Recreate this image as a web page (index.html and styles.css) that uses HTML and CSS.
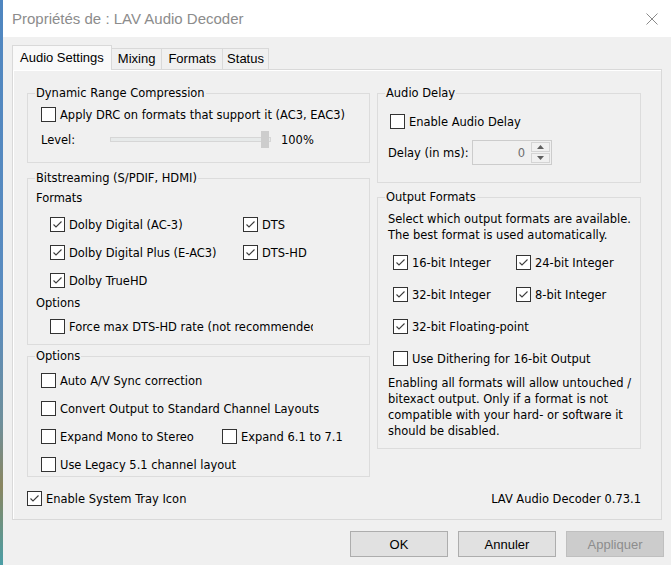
FILE: index.html
```html
<!DOCTYPE html>
<html lang="fr">
  <head>
    <meta charset="utf-8">
    <title>Propriétés de : LAV Audio Decoder</title>
    <link rel="stylesheet" href="styles.css">
  </head>

  <body>
    <div class="Screen">
      <div class="Desktop"></div>

      <div class="Window">
        <!-- title bar -->
        <div class="TitleBar">
          <span class="TitleText">Propriétés de : LAV Audio Decoder</span>
          <svg class="CloseIcon" width="12" height="12" viewBox="0 0 12 12">
            <path d="M0.5 0.5 L11.5 11.5 M11.5 0.5 L0.5 11.5" stroke="#8a8a8a" stroke-width="1" fill="none" />
          </svg>
        </div>

        <!-- tabs -->
        <div class="Tabs">
          <div class="Tab selected">Audio Settings</div>
          <div class="Tab">Mixing</div>
          <div class="Tab">Formats</div>
          <div class="Tab status">Status</div>
        </div>

        <div class="Panel">
          <!-- left column -->
          <div class="Column leftCol">
            <div class="Group drc">
              <span class="GroupTitle">Dynamic Range Compression</span>
              <label class="Check drcCheck"><span class="Box"></span>Apply DRC on formats that support it (AC3, EAC3)</label>
              <div class="LevelRow">
                <span class="LevelLabel">Level:</span>
                <div class="Track"><span class="Thumb"></span></div>
                <span class="LevelValue">100%</span>
              </div>
            </div>

            <div class="Group bitstream">
              <span class="GroupTitle">Bitstreaming (S/PDIF, HDMI)</span>
              <span class="SubLabel">Formats</span>
              <div class="BitGrid">
                <label class="Check"><span class="Box"><svg width="13" height="13" viewBox="0 0 13 13"><path d="M2.5 6.5 L5 9 L10.5 3.5" /></svg></span>Dolby Digital (AC-3)</label>
                <label class="Check"><span class="Box"><svg width="13" height="13" viewBox="0 0 13 13"><path d="M2.5 6.5 L5 9 L10.5 3.5" /></svg></span>DTS</label>
                <label class="Check"><span class="Box"><svg width="13" height="13" viewBox="0 0 13 13"><path d="M2.5 6.5 L5 9 L10.5 3.5" /></svg></span>Dolby Digital Plus (E-AC3)</label>
                <label class="Check"><span class="Box"><svg width="13" height="13" viewBox="0 0 13 13"><path d="M2.5 6.5 L5 9 L10.5 3.5" /></svg></span>DTS-HD</label>
                <label class="Check"><span class="Box"><svg width="13" height="13" viewBox="0 0 13 13"><path d="M2.5 6.5 L5 9 L10.5 3.5" /></svg></span>Dolby TrueHD</label>
              </div>
              <span class="SubLabel optLabel">Options</span>
              <label class="Check forceCheck"><span class="Box"></span>Force max DTS-HD rate (not recommended)</label>
            </div>

            <div class="Group options">
              <span class="GroupTitle">Options</span>
              <div class="OptList">
                <label class="Check"><span class="Box"></span>Auto A/V Sync correction</label>
                <label class="Check"><span class="Box"></span>Convert Output to Standard Channel Layouts</label>
                <div class="OptPair">
                  <label class="Check monoCheck"><span class="Box"></span>Expand Mono to Stereo</label>
                  <label class="Check"><span class="Box"></span>Expand 6.1 to 7.1</label>
                </div>
                <label class="Check"><span class="Box"></span>Use Legacy 5.1 channel layout</label>
              </div>
            </div>

            <label class="Check trayCheck"><span class="Box"><svg width="13" height="13" viewBox="0 0 13 13"><path d="M2.5 6.5 L5 9 L10.5 3.5" /></svg></span>Enable System Tray Icon</label>
          </div>

          <!-- right column -->
          <div class="Column rightCol">
            <div class="Group delay">
              <span class="GroupTitle">Audio Delay</span>
              <label class="Check delayCheck"><span class="Box"></span>Enable Audio Delay</label>
              <div class="DelayRow">
                <span class="DelayLabel">Delay (in ms):</span>
                <div class="Spin">
                  <span class="SpinValue">0</span>
                  <div class="SpinButtons">
                    <span class="SpinBtn"><svg width="7" height="4" viewBox="0 0 7 4"><path d="M0 4 L3.5 0 L7 4 Z" /></svg></span>
                    <span class="SpinBtn"><svg width="7" height="4" viewBox="0 0 7 4"><path d="M0 0 L3.5 4 L7 0 Z" /></svg></span>
                  </div>
                </div>
              </div>
            </div>

            <div class="Group output">
              <span class="GroupTitle">Output Formats</span>
              <p class="Desc">Select which output formats are available.<br>The best format is used automatically.</p>
              <div class="OutGrid">
                <label class="Check"><span class="Box"><svg width="13" height="13" viewBox="0 0 13 13"><path d="M2.5 6.5 L5 9 L10.5 3.5" /></svg></span>16-bit Integer</label>
                <label class="Check"><span class="Box"><svg width="13" height="13" viewBox="0 0 13 13"><path d="M2.5 6.5 L5 9 L10.5 3.5" /></svg></span>24-bit Integer</label>
                <label class="Check"><span class="Box"><svg width="13" height="13" viewBox="0 0 13 13"><path d="M2.5 6.5 L5 9 L10.5 3.5" /></svg></span>32-bit Integer</label>
                <label class="Check"><span class="Box"><svg width="13" height="13" viewBox="0 0 13 13"><path d="M2.5 6.5 L5 9 L10.5 3.5" /></svg></span>8-bit Integer</label>
                <label class="Check wide"><span class="Box"><svg width="13" height="13" viewBox="0 0 13 13"><path d="M2.5 6.5 L5 9 L10.5 3.5" /></svg></span>32-bit Floating-point</label>
                <label class="Check wide"><span class="Box"></span>Use Dithering for 16-bit Output</label>
              </div>
              <p class="Note">Enabling all formats will allow untouched /<br>bitexact output. Only if a format is not<br>compatible with your hard- or software it<br>should be disabled.</p>
            </div>

            <div class="Version">LAV Audio Decoder 0.73.1</div>
          </div>
        </div>

        <!-- dialog buttons -->
        <div class="Buttons">
          <button class="Btn">OK</button>
          <button class="Btn">Annuler</button>
          <button class="Btn disabled" disabled>Appliquer</button>
        </div>
      </div>
    </div>
  </body>
</html>
```

FILE: styles.css
```css
body {
  margin: 0;
  font-family: "DejaVu Sans Condensed", "DejaVu Sans", sans-serif;
  font-stretch: condensed;
  font-size: 12.75px;
  color: #000;
}

.Screen {
  display: flex;
  width: 671px;
  height: 565px;
  overflow: hidden;
  background: #f0f0f0;
}

.Desktop {
  width: 3px;
  background: linear-gradient(#4f86c0 0%, #5a8cc0 55%, #6f8f9a 75%, #8a8660 86%, #4b9ea6 100%);
}

.Window {
  flex: 1;
  display: flex;
  flex-direction: column;
  background: #f0f0f0;
}

.TitleBar {
  height: 37px;
  display: flex;
  align-items: center;
  padding: 0 13px 0 9px;
  background: #fff;
}

.TitleText {
  flex: 1;
  font-family: "Liberation Sans", sans-serif;
  font-size: 15px;
  color: #8c8c8c;
}

/* tabs */
.Tabs {
  display: flex;
  align-items: flex-end;
  height: 24px;
  margin-top: 8px;
  padding-left: 9px;
}

.Tab {
  box-sizing: border-box;
  height: 21px;
  padding: 0 6px;
  margin-left: -1px;
  border: 1px solid #d9d9d9;
  border-bottom: none;
  background: #f0f0f0;
  font-family: "Liberation Sans", sans-serif;
  font-size: 13px;
  line-height: 20px;
}

.Tab.status {
  padding: 0 4px;
}

.Tab.selected {
  position: relative;
  z-index: 1;
  height: 25px;
  margin-left: 0;
  margin-bottom: -1px;
  padding: 0 7px;
  background: #f9f9f9;
  line-height: 23px;
}

.Panel {
  box-sizing: border-box;
  width: 650px;
  height: 451px;
  margin-left: 9px;
  padding: 23px 0 0 14px;
  display: flex;
  gap: 7px;
  border: 1px solid #d9d9d9;
  box-shadow: inset 1px 1px 0 #fff;
  background: #f0f0f0;
}

.Column {
  display: flex;
  flex-direction: column;
  align-items: flex-start;
}

.leftCol {
  width: 343px;
}

.rightCol {
  width: 264px;
}

/* group boxes */
.Group {
  box-sizing: border-box;
  align-self: stretch;
  display: flex;
  flex-direction: column;
  align-items: flex-start;
  border: 1px solid #dcdcdc;
}

.GroupTitle {
  margin: -9px 0 0 7px;
  padding: 0 1px;
  line-height: 16px;
  background: #f0f0f0;
  white-space: nowrap;
}

.SubLabel {
  margin: 4px 0 0 8px;
  line-height: 16px;
}

/* checkboxes */
.Check {
  display: flex;
  align-items: center;
  height: 20px;
  white-space: nowrap;
}

.Box {
  box-sizing: border-box;
  width: 15px;
  height: 15px;
  margin-right: 4px;
  flex-shrink: 0;
  display: flex;
  align-items: center;
  justify-content: center;
  border: 1px solid #333;
  background: #fff;
}

.Box path {
  fill: none;
  stroke: #3c3c3c;
  stroke-width: 1.1;
}

/* dynamic range compression */
.drc {
  padding-bottom: 13px;
}

.drcCheck {
  margin: 3px 0 0 13px;
}

.LevelRow {
  display: flex;
  align-items: center;
  height: 20px;
  margin: 5px 0 0 13px;
}

.LevelLabel {
  width: 69px;
}

.Track {
  box-sizing: border-box;
  width: 161px;
  height: 5px;
  display: flex;
  align-items: center;
  justify-content: flex-end;
  border: 1px solid #d6d6d6;
  background: #e7eaea;
}

.Thumb {
  flex-shrink: 0;
  width: 8px;
  height: 17px;
  margin-right: 1px;
  background: #cdcdcd;
}

.LevelValue {
  margin-left: 10px;
}

/* bitstreaming */
.bitstream {
  margin-top: 15px;
  padding-bottom: 8px;
}

.BitGrid {
  display: grid;
  grid-template-columns: 193px auto;
  row-gap: 8px;
  margin: 8px 0 0 22px;
}

.optLabel {
  margin-top: 5px;
}

.forceCheck {
  width: 263px;
  overflow: hidden;
  margin: 5px 0 0 22px;
}

/* options */
.options {
  margin-top: 11px;
  padding-bottom: 2px;
}

.OptList {
  display: flex;
  flex-direction: column;
  gap: 8px;
  margin: 6px 0 0 13px;
}

.OptPair {
  display: flex;
}

.monoCheck {
  width: 181px;
}

.trayCheck {
  margin-top: 11px;
}

/* audio delay */
.delay {
  padding-bottom: 17px;
}

.delayCheck {
  margin: 10px 0 0 12px;
}

.DelayRow {
  display: flex;
  align-items: center;
  height: 25px;
  margin: 9px 0 0 10px;
}

.DelayLabel {
  width: 84px;
}

.Spin {
  box-sizing: border-box;
  width: 80px;
  height: 25px;
  display: flex;
  border: 1px solid #cccccc;
  background: #f0f0f0;
}

.SpinValue {
  flex: 1;
  padding-right: 6px;
  text-align: right;
  line-height: 23px;
  color: #6d6d6d;
}

.SpinButtons {
  width: 19px;
  display: flex;
  flex-direction: column;
  gap: 1px;
  padding: 1px 1px 1px 0;
}

.SpinBtn {
  flex: 1;
  display: flex;
  align-items: center;
  justify-content: center;
  border: 1px solid #d4d4d4;
  background: #f0f0f0;
}

.SpinBtn path {
  fill: #5f5f5f;
}

/* output formats */
.output {
  margin-top: 14px;
  padding-bottom: 9px;
}

.Desc {
  margin: 6px 0 0 10px;
  line-height: 16px;
  white-space: nowrap;
}

.OutGrid {
  display: grid;
  grid-template-columns: 123px auto;
  row-gap: 12px;
  margin: 9px 0 0 15px;
}

.OutGrid .wide {
  grid-column: 1 / 3;
}

.Note {
  margin: 7px 0 0 10px;
  line-height: 16px;
  white-space: nowrap;
}

.Version {
  align-self: stretch;
  margin-top: 42px;
  line-height: 16px;
  text-align: right;
}

/* dialog buttons */
.Buttons {
  display: flex;
  justify-content: flex-end;
  gap: 10px;
  margin-top: 11px;
  padding-right: 7px;
}

.Btn {
  box-sizing: border-box;
  width: 98px;
  height: 26px;
  border: 1px solid #adadad;
  background: #e1e1e1;
  font-family: "Liberation Sans", sans-serif;
  font-size: 13px;
  color: #000;
  padding: 0;
}

.Btn.disabled {
  border-color: #bfbfbf;
  background: #cccccc;
  color: #8d8d8d;
}
```
